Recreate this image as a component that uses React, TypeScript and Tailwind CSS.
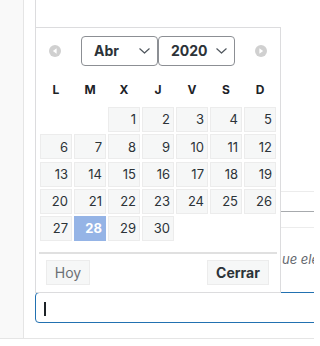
import React from 'react'

const weekDays = ['L', 'M', 'X', 'J', 'V', 'S', 'D']

// April 2020 starts on a Wednesday (Monday-first week)
const leading = 2
const daysInMonth = 30
const selectedDay = 28

function Chevron() {
  return (
    <svg width="11" height="6" viewBox="0 0 11 6" fill="none">
      <path d="M0.8 0.8L5.5 5L10.2 0.8" stroke="#50575e" strokeWidth="1.2" strokeLinecap="round" strokeLinejoin="round" />
    </svg>
  )
}

function NavArrow({ dir }: { dir: 'prev' | 'next' }) {
  return (
    <svg width="12" height="12" viewBox="0 0 12 12">
      <circle cx="6" cy="6" r="6" fill="#d0d0d0" />
      {dir === 'prev' ? (
        <path d="M7.6 3.2L3.9 6L7.6 8.8Z" fill="#ffffff" />
      ) : (
        <path d="M4.4 3.2L8.1 6L4.4 8.8Z" fill="#ffffff" />
      )}
    </svg>
  )
}

function FakeSelect({ label }: { label: string }) {
  return (
    <div className="flex items-center justify-between w-[77px] h-[30px] pl-[12px] pr-[7px] border border-[#8c8f94] rounded-[4px] bg-white">
      <span className="text-[14px] font-bold text-[#2c3338] leading-none">{label}</span>
      <Chevron />
    </div>
  )
}

function Datepicker() {
  const cells: (number | null)[] = []
  for (let i = 0; i < leading; i++) cells.push(null)
  for (let d = 1; d <= daysInMonth; d++) cells.push(d)

  return (
    <div className="absolute left-[11px] top-[27px] w-[246px] h-[266px] bg-white border border-[#dcdcde] px-[4px] pt-[8px] z-10">
      {/* Header */}
      <div className="flex items-center h-[30px]">
        <div className="ml-[9px] w-[12px] h-[12px] flex">
          <NavArrow dir="prev" />
        </div>
        <div className="ml-[20px] flex">
          <FakeSelect label="Abr" />
          <FakeSelect label="2020" />
        </div>
        <div className="ml-[20px] w-[12px] h-[12px] flex">
          <NavArrow dir="next" />
        </div>
      </div>

      {/* Week days */}
      <div className="grid grid-cols-7 gap-x-[2px] mt-[11px] h-[26px]">
        {weekDays.map(d => (
          <div key={d} className="flex items-center justify-center text-[12px] font-bold text-[#1d2327]">
            {d}
          </div>
        ))}
      </div>

      {/* Days */}
      <div className="grid grid-cols-7 gap-x-[2px] gap-y-[2.25px] mt-[4px]">
        {cells.map((d, i) =>
          d === null ? (
            <div key={`e${i}`} className="h-[25px]" />
          ) : d === selectedDay ? (
            <div
              key={d}
              className="h-[25px] flex items-center justify-end pr-[3px] pt-[1px] bg-[#95b4e6] border border-[#95b4e6] text-[13px] font-bold text-white"
            >
              {d}
            </div>
          ) : (
            <div
              key={d}
              className="h-[25px] flex items-center justify-end pr-[3px] pt-[1px] bg-[#f6f7f7] border border-[#ececec] text-[13px] text-[#2c3338]"
            >
              {d}
            </div>
          )
        )}
      </div>

      {/* Button pane */}
      <div className="mx-[-1px] mt-[11px] h-[2px] bg-[#e0e0e0]" />
      <div className="flex items-center justify-between mt-[6px] h-[25px]">
        <button className="ml-[6px] w-[44px] h-[25px] bg-[#f6f7f7] border border-[#ececec] text-[14px] text-[#6c7075]">
          Hoy
        </button>
        <button className="mr-[7px] w-[62px] h-[25px] bg-[#f6f7f7] border border-[#ececec] text-[14px] font-bold text-[#2c3338]">
          Cerrar
        </button>
      </div>
    </div>
  )
}

export default function App() {
  return (
    <div className="w-[314px] h-[346px] bg-white overflow-hidden font-[Inter,sans-serif]">
      <div className="flex h-[339px] border-b border-[#e5e5e5]">
        <div className="w-[24px] shrink-0 bg-[#f9f9f9] border-r border-[#e5e5e5]" />
        <div className="relative flex-1 min-w-0 pl-[11px] overflow-hidden">
          {/* Box above the field */}
          <div className="h-[27px] border-l border-[#dcdcde]" />

          {/* Field hidden behind the popup */}
          <div className="mt-[164px] w-[320px] h-[21px] border-t border-b border-t-[#ececec] border-b-[#a7aaad]" />
          <div className="mt-[15px] w-[320px] border-t border-[#ececec]" />
          <p className="mt-[21px] h-[20px] pl-[247px] leading-[20px] text-[13px] italic text-[#646970] whitespace-nowrap">
            ue ele
          </p>

          {/* Focused date input */}
          <div className="mt-[23px] w-[320px] h-[31px] flex items-center pl-[8px] border border-[#2271b1] rounded-[4px] bg-white">
            <span className="w-[1.5px] h-[14px] mt-[3px] bg-[#1d2327]" />
          </div>

          <Datepicker />
        </div>
      </div>
    </div>
  )
}
